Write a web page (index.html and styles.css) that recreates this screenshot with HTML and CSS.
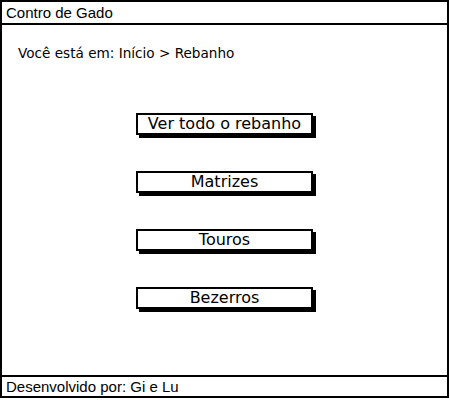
FILE: index.html
```html
<!DOCTYPE html>
<html lang="pt">
<head>
<meta charset="utf-8">
<link rel="stylesheet" href="styles.css">
</head>
<body>
<div class="window">
  <div class="titlebar">Contro de Gado</div>
  <div class="content">
    <p class="crumb">Você está em: Início &gt; Rebanho</p>
    <div class="menu">
      <div class="btn">Ver todo o rebanho</div>
      <div class="btn">Matrizes</div>
      <div class="btn">Touros</div>
      <div class="btn">Bezerros</div>
    </div>
  </div>
  <div class="footer">Desenvolvido por: Gi e Lu</div>
</div>
</body>
</html>
```
FILE: styles.css
```css
html, body { margin: 0; padding: 0; background: #fff; }
.window {
  box-sizing: border-box;
  width: 449px;
  height: 398px;
  border: 2px solid #000;
  display: flex;
  flex-direction: column;
  color: #000;
}
.titlebar {
  height: 21px;
  border-bottom: 2px solid #000;
  font: 15px "Liberation Sans", Arial, sans-serif;
  line-height: 21px;
  padding-left: 4px;
}
.content {
  flex: 1;
  display: flex;
  flex-direction: column;
}
.crumb {
  margin: 19px 0 0 16px;
  font: 13.6px "DejaVu Sans", sans-serif;
  line-height: 18px;
}
.menu {
  display: flex;
  flex-direction: column;
  align-items: center;
  gap: 36px;
  margin-top: 51px;
}
.btn {
  box-sizing: border-box;
  width: 177px;
  height: 22px;
  border: 2px solid #000;
  box-shadow: 3px 3px 0 #000;
  text-align: center;
  font: 16px "DejaVu Sans", sans-serif;
  line-height: 18px;
}
.footer {
  height: 19px;
  border-top: 2px solid #000;
  font: 15px "Liberation Sans", Arial, sans-serif;
  line-height: 19px;
  padding-left: 4px;
}
```
